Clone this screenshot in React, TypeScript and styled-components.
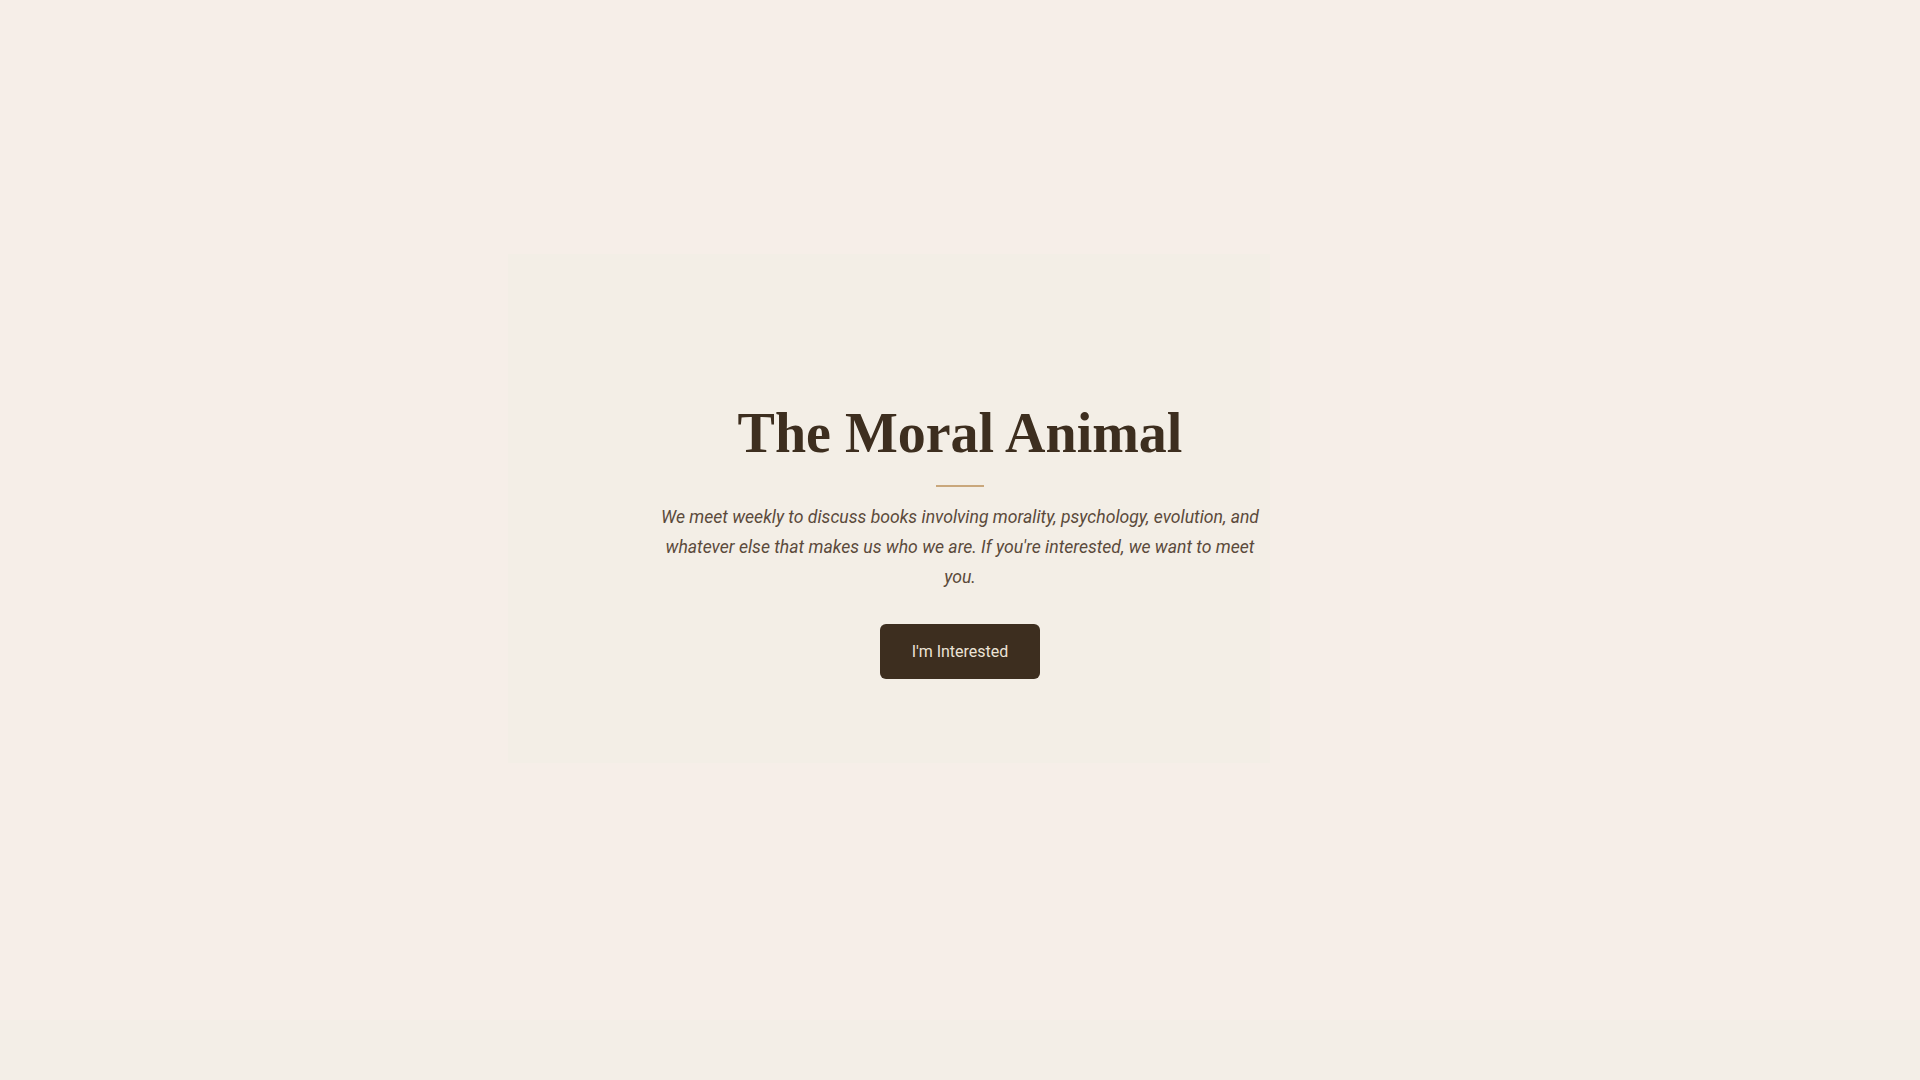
import styled, { createGlobalStyle } from 'styled-components';

const GlobalStyle = createGlobalStyle`
  * { box-sizing: border-box; }
  html, body {
    margin: 0;
    padding: 0;
    background: #f3eee7;
  }
  body {
    font-family: Roboto, "Liberation Sans", sans-serif;
    color: #3d2e1f;
  }
`;

const Page = styled.div`
  display: flex;
  flex-direction: column;
  min-height: 100vh;
`;

const Hero = styled.section`
  position: relative;
  height: 1020px;
  background: #f6eee8;
  display: flex;
  align-items: center;
  justify-content: center;
  overflow: hidden;

  &::before {
    content: '';
    position: absolute;
    left: 508px;
    top: 254px;
    width: 762px;
    height: 509px;
    background: #f3eee6;
    pointer-events: none;
  }
`;

const Content = styled.div`
  position: relative;
  display: flex;
  flex-direction: column;
  align-items: center;
  text-align: center;
  margin-top: 62px;
`;

const Title = styled.h1`
  margin: 0;
  font-family: "Liberation Serif", "Times New Roman", serif;
  font-weight: 700;
  font-size: 56px;
  line-height: 1.1;
  color: #3d2e1f;
`;

const Divider = styled.div`
  width: 48px;
  height: 2px;
  margin: 20px 0 15px;
  background: #c9a77c;
`;

const Lead = styled.p`
  margin: 0;
  max-width: 610px;
  font-style: italic;
  font-size: 1.1rem;
  line-height: 30px;
  color: #5b4a3b;
`;

const Button = styled.button`
  margin-top: 32px;
  width: 160px;
  height: 55px;
  border: none;
  border-radius: 6px;
  background: #3d2e1f;
  color: #ece3d6;
  font-family: Roboto, "Liberation Sans", sans-serif;
  font-size: 16px;
  cursor: pointer;
`;

const Footer = styled.footer`
  height: 60px;
  background: #f3eee7;
`;

export default function App() {
  return (
    <>
      <GlobalStyle />
      <Page>
        <Hero>
          <Content>
            <Title>The Moral Animal</Title>
            <Divider />
            <Lead>
              We meet weekly to discuss books involving morality, psychology, evolution, and
              whatever else that makes us who we are. If you're interested, we want to meet you.
            </Lead>
            <Button>I'm Interested</Button>
          </Content>
        </Hero>
        <Footer />
      </Page>
    </>
  );
}
